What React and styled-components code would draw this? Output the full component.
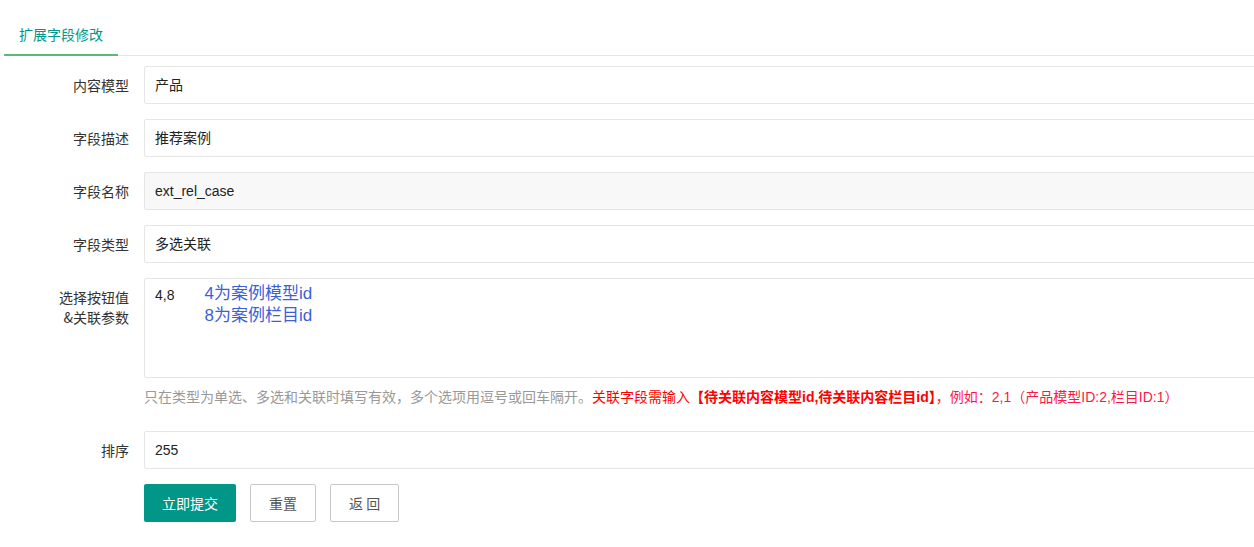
import React from 'react';
import styled, { createGlobalStyle } from 'styled-components';

const GlobalStyle = createGlobalStyle`
  html, body {
    margin: 0;
    padding: 0;
    background: #ffffff;
    overflow: hidden;
  }
  body {
    font-family: "Liberation Sans", "Noto Sans CJK SC", sans-serif;
    font-size: 14px;
    color: #333333;
  }
`;

const fields = [
  { label: '内容模型', value: '产品' },
  { label: '字段描述', value: '推荐案例' },
  { label: '字段名称', value: 'ext_rel_case', readOnly: true },
  { label: '字段类型', value: '多选关联' },
];

export default function App() {
  return (
    <Page>
      <GlobalStyle />
      <TabTitle>
        <TabItem $active>扩展字段修改</TabItem>
      </TabTitle>
      <Form>
        {fields.map((f) => (
          <FormItem key={f.label}>
            <Label>{f.label}</Label>
            <InputBlock>
              <Input $readOnly={f.readOnly}>{f.value}</Input>
            </InputBlock>
          </FormItem>
        ))}
        <FormItem>
          <Label>
            选择按钮值
            <br />
            &amp;关联参数
          </Label>
          <InputBlock>
            <TextArea>
              <span>4,8</span>
              {/* 截图上的标注 */}
              <Note>
                4为案例模型id
                <br />
                8为案例栏目id
              </Note>
            </TextArea>
            <Aux>
              只在类型为单选、多选和关联时填写有效，多个选项用逗号或回车隔开。
              <Red>
                关联字段需输入<b>【待关联内容模型id,待关联内容栏目id】</b>
              </Red>
              <Pink>，例如：2,1（产品模型ID:2,栏目ID:1）</Pink>
            </Aux>
          </InputBlock>
        </FormItem>
        <FormItem>
          <Label>排序</Label>
          <InputBlock>
            <Input>255</Input>
          </InputBlock>
        </FormItem>
        <FormItem>
          <InputBlock>
            <ButtonRow>
              <Button $primary>立即提交</Button>
              <Button>重置</Button>
              <Button>返 回</Button>
            </ButtonRow>
          </InputBlock>
        </FormItem>
      </Form>
    </Page>
  );
}

const Page = styled.div`
  padding: 15px 0 0 4px;
  width: 1300px;
`;
const TabTitle = styled.ul`
  margin: 0;
  padding: 0;
  list-style: none;
  display: flex;
  height: 40px;
  border-bottom: 1px solid #e6e6e6;
`;
const TabItem = styled.li`
  padding: 0 15px;
  line-height: 38px;
  height: 40px;
  font-size: 14px;
  color: ${(p) => (p.$active ? '#009688' : '#333')};
  border-bottom: ${(p) => (p.$active ? '2px solid #5FB878' : 'none')};
  box-sizing: border-box;
  position: relative;
  top: 1px;
`;
const Form = styled.div`
  padding-top: 10px;
`;
const FormItem = styled.div`
  display: flex;
  margin-bottom: 15px;
`;
const Label = styled.label`
  width: 110px;
  flex: none;
  padding: 9px 15px;
  line-height: 20px;
  text-align: right;
  color: #333;
  font-size: 14px;
  font-family: "Noto Sans CJK SC", sans-serif;
  box-sizing: content-box;
`;
const InputBlock = styled.div`
  flex: 1;
  min-width: 0;
  &:first-child {
    margin-left: 140px;
  }
`;
const Input = styled.div`
  height: 38px;
  box-sizing: border-box;
  border: 1px solid #e6e6e6;
  border-radius: 2px;
  padding-left: 10px;
  line-height: 36px;
  background: ${(p) => (p.$readOnly ? '#f8f8f8' : '#fff')};
  color: #222;
`;
const TextArea = styled.div`
  height: 100px;
  box-sizing: border-box;
  border: 1px solid #e6e6e6;
  border-radius: 2px;
  padding: 6px 10px;
  line-height: 20px;
  display: flex;
  gap: 30px;
  color: #222;
`;
const Note = styled.div`
  margin-top: -2px;
  color: #3c5fd8;
  font-size: 17px;
  line-height: 22px;
`;
const Aux = styled.div`
  padding: 9px 0;
  line-height: 20px;
  color: #999;
  font-size: 14px;
  white-space: nowrap;
`;
const Red = styled.span`
  color: #ff0000;
`;
const Pink = styled.span`
  color: #ff1744;
`;
const ButtonRow = styled.div`
  display: flex;
  gap: 14px;
`;
const Button = styled.button`
  height: 38px;
  padding: 0 18px;
  font-size: 14px;
  font-family: "Noto Sans CJK SC", sans-serif;
  border-radius: 2px;
  cursor: pointer;
  border: ${(p) => (p.$primary ? 'none' : '1px solid #c9c9c9')};
  background: ${(p) => (p.$primary ? '#009688' : '#fff')};
  color: ${(p) => (p.$primary ? '#fff' : '#555')};
`;
